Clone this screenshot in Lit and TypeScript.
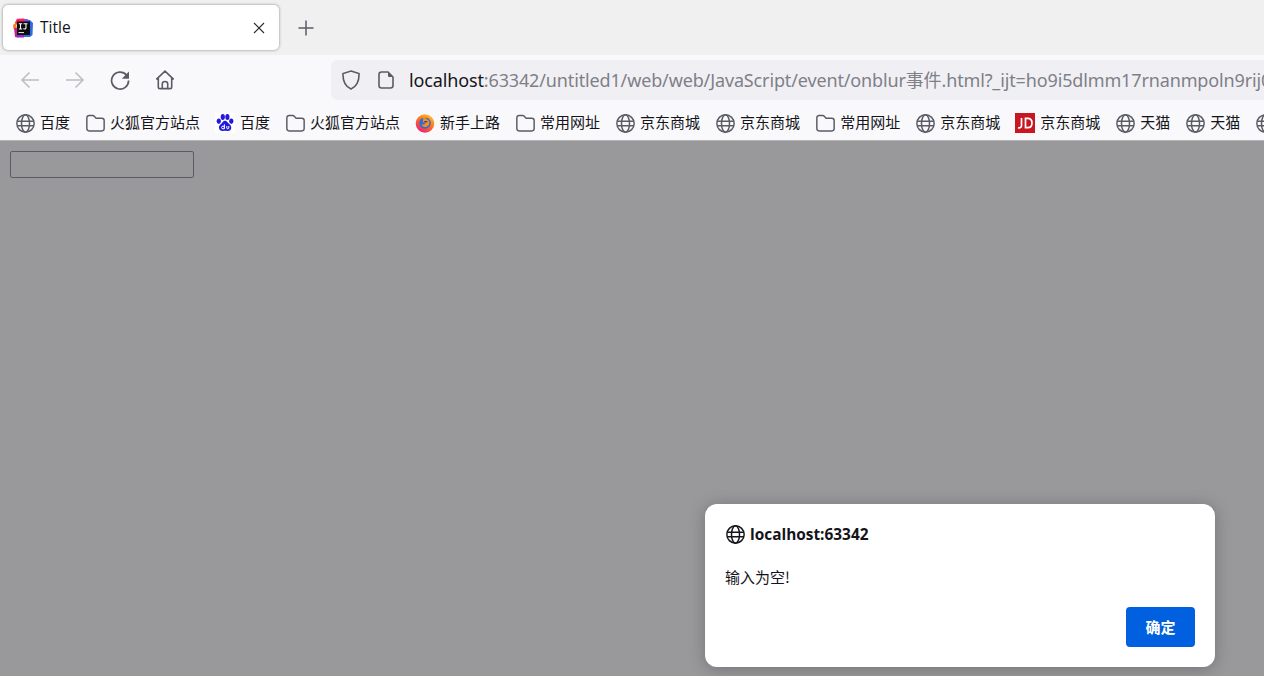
import { LitElement, html, css } from "lit";
import { customElement } from "lit/decorators.js";

const globe = (s = 19, c = "#5b5b66") => html`<svg width=${s} height=${s} viewBox="0 0 18 18" fill="none" stroke=${c} stroke-width="1.400"><circle cx="9" cy="9" r="8.200"/><ellipse cx="9" cy="9" rx="3.800" ry="8.200"/><path d="M1 6.800h16M1 11.200h16"/></svg>`;
const folder = html`<svg width="19" height="19" viewBox="0 0 18 18" fill="none" stroke="#5b5b66" stroke-width="1.400"><path d="M.8 3.500C.8 2.200 1.700 1.500 3 1.500h3.400c.6 0 1 .2 1.400.6L9.600 4H15c1.300 0 2.200.9 2.200 2.200v7.600c0 1.300-.9 2.200-2.200 2.200H3c-1.300 0-2.200-.9-2.200-2.200z"/></svg>`;
const paw = html`<svg class="fav" width="20" height="20" viewBox="0 0 20 20"><rect width="20" height="20" fill="#fff"/><g fill="#2319dc"><ellipse cx="3.800" cy="8.200" rx="2.100" ry="2.700"/><ellipse cx="7.800" cy="4" rx="2.100" ry="2.900"/><ellipse cx="12.400" cy="4" rx="2.100" ry="2.900"/><ellipse cx="16.300" cy="8.200" rx="2.100" ry="2.700"/><path d="M10 7.800c-2 0-2.500 2-4 3.300-1.800 1.500-2.300 2.900-2 4.200.5 2.200 2.300 2.900 4 2.600 1.400-.2 2.800-.2 4.200 0 1.900.3 3.600-.4 4-2.400.3-1.700-.4-3.100-1.900-4.400C12.700 10 12 7.800 10 7.800z"/></g><g fill="none" stroke="#fff" stroke-width="1"><circle cx="8" cy="14.500" r="1.400"/><path d="M9.400 11.300v4.600M11.800 13v2c0 1.100 2 1.100 2 0v-2"/></g></svg>`;
const firefox = html`<svg class="fav" width="20" height="20" viewBox="0 0 20 20"><defs><linearGradient id="ff" x1="0.800" y1="0" x2="0.200" y2="1"><stop offset="0" stop-color="#ffc62e"/><stop offset="0.500" stop-color="#ff6a22"/><stop offset="1" stop-color="#e5197d"/></linearGradient></defs><circle cx="10" cy="10.500" r="9.300" fill="url(#ff)"/><circle cx="10" cy="10" r="5.800" fill="#2a6fd6"/><path d="M7 4.500c2-1.500 5-1 6 .6-1.200-.3-2.400.2-2.600 1 2.400-.2 4.200 1.700 4 4-.2 2.600-2.600 4.400-5 3.900-1.700-.4-2.700-1.600-2.800-3 1.400 1 3.300.8 4-.4-1.600-.2-2.700-.9-2.700-2 0-1.400.6-2 .3-3.200z" fill="#ff8c1a"/><path d="M11 8c-1 0-2 .5-2.500 1.200 1.500.3 3 .3 4.300-.2C12.300 8.300 11.700 8 11 8z" fill="#1b3fa6"/></svg>`;
const jd = html`<svg class="fav" width="20" height="20" viewBox="0 0 20 20"><rect width="20" height="20" fill="#c91623"/><path d="M6.500 5v7.500c0 2-1.500 2.800-3.500 2.300M10.500 5.300v9.400h2.200c2.600 0 4.300-1.800 4.300-4.700 0-2.900-1.700-4.700-4.300-4.700z" fill="none" stroke="#fff" stroke-width="1.700"/></svg>`;
const ij = html`<svg width="20" height="20" viewBox="0 0 20 20"><path d="M2 4.500L4 .8 11 .5l2 3-4 3H3z" fill="#f5245e"/><path d="M0 7l3-2.500 1 7L.5 11z" fill="#f9801a"/><path d="M1 10l3 0 1 9.500-3-.5z" fill="#c4218e"/><path d="M3 16h9l-1 3.500H4z" fill="#8a2bc2"/><path d="M12 1.500l5 .5 3 3-.5 12-2.500 2h-6l1-16z" fill="#2f6ae6"/><path d="M11 .8l4 .7 1 3-4 1z" fill="#7a4be0"/><rect x="4" y="3.500" width="13" height="13.500" fill="#0b0b0d"/><path d="M5.800 5.700h3.400M7.500 5.700v5.300M5.800 11h3.400M10.500 5.700h4M13 5.700v3.800c0 1.400-1.500 1.900-2.800 1.100" fill="none" stroke="#fff" stroke-width="1.100"/><rect x="5.500" y="14" width="5.500" height="1.100" fill="#ddd"/></svg>`;

const bookmarks = [
  [globe(), "百度"], [folder, "火狐官方站点"], [paw, "百度"], [folder, "火狐官方站点"],
  [firefox, "新手上路"], [folder, "常用网址"], [globe(), "京东商城"], [globe(), "京东商城"],
  [folder, "常用网址"], [globe(), "京东商城"], [jd, "京东商城"], [globe(), "天猫"], [globe(), "天猫"], [globe(), ""],
] as const;

@customElement("app-root")
export class AppRoot extends LitElement {
  static styles = css`
    :host { display: flex; flex-direction: column; width: 1264px; height: 676px; overflow: hidden; position: relative;
      font-family: "Noto Sans CJK SC", "Noto Sans", sans-serif; background: #99999b; color: #15141a; }
    svg { display: block; flex: none; }
    .tabbar { height: 55px; flex: none; background: #f0f0f1; display: flex; align-items: flex-start; padding: 5px 0 0 3px; box-sizing: border-box; }
    .tab { width: 276px; height: 45px; background: #fff; border-radius: 5px; box-shadow: 0 0 3px rgba(0,0,0,.45); display: flex; align-items: center; padding: 0 12px 0 10px; box-sizing: border-box; }
    .tab-title { font: 15.500px/20px "Open Sans", sans-serif; margin: -1px 0 0 7px; flex: 1; }
    .tab-x { margin-right: 2px; }
    .plus { margin: 15px 0 0 19px; }
    .toolbar { height: 45px; flex: none; background: #f9f9fb; display: flex; align-items: center; padding: 5px 0 0 20px; box-sizing: border-box; }
    .nav + .nav { margin-left: 25px; }
    .url { margin-left: 156px; flex: none; width: 960px; height: 40px; background: #f0f0f4; border-radius: 6px 0 0 6px; display: flex; align-items: center; padding-left: 11px; box-sizing: border-box; overflow: hidden; }
    .url-doc { margin-left: 18px; }
    .url-text { margin-left: 15px; font: 18px/24px "Noto Sans", "Noto Sans CJK SC", sans-serif; white-space: nowrap; color: #15141a; letter-spacing: -.14px; }
    .url-text span { color: #7f7f88; }
    .bookmarks { height: 41px; flex: none; background: #f9f9fb; display: flex; align-items: center; padding: 5px 0 0 16px; gap: 16px; box-sizing: border-box; border-bottom: 1px solid #b5b5b7; overflow: hidden; white-space: nowrap; }
    .bm { display: flex; align-items: center; gap: 6px; flex: none; font-size: 15px; line-height: 20px; color: #15141a; }
    .bm > span { margin-top: -2px; }
    .bm > svg { margin: 1px -1px 0 0; }
    .bm > .fav { margin: 0 -1px; }
    .page { flex: 1; padding: 10px; box-sizing: border-box; }
    .field { width: 184px; height: 27px; border: 1px solid #5c5c66; border-radius: 2px; box-sizing: border-box; }
    .dialog { position: absolute; left: 705px; top: 504px; width: 510px; height: 163px; background: #fff; border-radius: 12px; box-shadow: 0 2px 16px rgba(58,57,68,.4); padding: 20px; box-sizing: border-box; display: flex; flex-direction: column; }
    .head { display: flex; align-items: center; gap: 6px; height: 21px; font: 700 15.400px/21px "Open Sans", sans-serif; color: #15141a; }
    .head svg { margin-left: 1px; margin-right: -1px; }
    .msg { margin-top: 22px; font: 15px/20px "Noto Sans CJK SC", sans-serif; color: #15141a; }
    .actions { margin-top: auto; display: flex; justify-content: flex-end; }
    .ok { width: 69px; height: 40px; border-radius: 4px; background: #0060df; color: #fff; display: flex; align-items: center; justify-content: center; font: 700 15px/20px "Noto Sans CJK SC", sans-serif; }
  `;

  render() {
    return html`
      <div class="tabbar">
        <div class="tab">
          ${ij}
          <span class="tab-title">Title</span>
          <svg class="tab-x" width="12" height="12" viewBox="0 0 12 12" stroke="#2b2a33" stroke-width="1.100"><path d="M1 1l10 10M11 1L1 11"/></svg>
        </div>
        <svg class="plus" width="16" height="16" viewBox="0 0 16 16" stroke="#5b5b66" stroke-width="1.500"><path d="M8 .5v15M.5 8h15"/></svg>
      </div>
      <div class="toolbar">
        <svg class="nav" width="20" height="20" viewBox="0 0 20 20" fill="none" stroke="#bdbdc2" stroke-width="1.500"><path d="M19 10H2M9.500 2.500L2 10l7.500 7.500"/></svg>
        <svg class="nav" width="20" height="20" viewBox="0 0 20 20" fill="none" stroke="#bdbdc2" stroke-width="1.500"><path d="M1 10h17M10.500 2.500L18 10l-7.500 7.500"/></svg>
        <svg class="nav" width="20" height="20" viewBox="0 0 20 20" fill="none" stroke="#5b5b66" stroke-width="1.700"><path d="M16.500 5A8.500 8.500 0 1 0 18.600 10.500"/><path d="M19 1.500v7.200h-7.200z" fill="#5b5b66" stroke="none"/></svg>
        <svg class="nav" width="20" height="20" viewBox="0 0 20 20" fill="none" stroke="#5b5b66" stroke-width="1.600"><path d="M1.300 9.300L10 1.200l8.700 8.100M3.300 7.800v9.100c0 1 .7 1.700 1.700 1.700h10c1 0 1.700-.7 1.700-1.700V7.800M7.300 18.600v-4.800c0-1.400 1.100-2.300 2.700-2.300s2.700.9 2.700 2.300v4.800"/></svg>
        <div class="url">
          <svg width="18" height="20" viewBox="0 0 18 20" fill="none" stroke="#5b5b66" stroke-width="1.600"><path d="M9 1l8 2.500c.3 7.500-2.500 13-8 15.500C3.500 16.500.7 11 1 3.500z"/></svg>
          <svg class="url-doc" width="16" height="18" viewBox="0 0 16 18" fill="none" stroke="#5b5b66" stroke-width="1.600"><path d="M10 1H3.500C2 1 1 2 1 3.500v11C1 16 2 17 3.500 17h9c1.500 0 2.500-1 2.500-2.500V6z"/><path d="M10 1v3.500c0 1 .6 1.500 1.500 1.500H15z" fill="#5b5b66" stroke="none"/></svg>
          <div class="url-text">localhost<span>:63342/untitled1/web/web/JavaScript/event/onblur事件.html?_ijt=ho9i5dlmm17rnanmpoln9rij0</span></div>
        </div>
      </div>
      <div class="bookmarks">
        ${bookmarks.map(([icon, label]) => html`<div class="bm">${icon}<span>${label}</span></div>`)}
      </div>
      <div class="page"><div class="field"></div></div>
      <div class="dialog">
        <div class="head">${globe(19, "#15141a")}<span>localhost:63342</span></div>
        <div class="msg">输入为空!</div>
        <div class="actions"><div class="ok">确定</div></div>
      </div>
    `;
  }
}
